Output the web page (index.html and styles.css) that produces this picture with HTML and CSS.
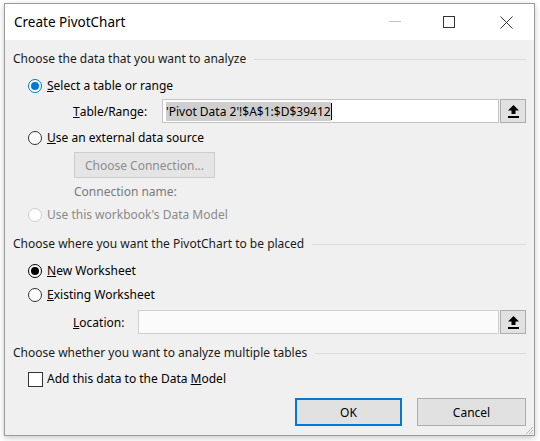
FILE: index.html
```html
<!DOCTYPE html>
<html lang="en">
<head>
<meta charset="utf-8">
<title>Create PivotChart</title>
<link rel="stylesheet" href="styles.css">
</head>
<body>
<div class="window">
  <div class="titlebar">
    <span class="title">Create PivotChart</span>
    <div class="controls">
      <span class="ctl ctl-min"><svg width="12" height="12" viewBox="0 0 12 12"><line x1="0" y1="5.5" x2="12" y2="5.5" stroke="#c4c4c4" stroke-width="1"/></svg></span>
      <span class="ctl ctl-max"><svg width="12" height="12" viewBox="0 0 12 12"><rect x="0.5" y="0.5" width="11" height="11" fill="none" stroke="#333" stroke-width="1"/></svg></span>
      <span class="ctl"><svg width="13" height="13" viewBox="0 0 13 13"><path d="M0.5 0.5 L12.5 12.5 M12.5 0.5 L0.5 12.5" stroke="#333" stroke-width="1" fill="none"/></svg></span>
    </div>
  </div>
  <div class="body">
    <div class="group-head gh-data"><span>Choose the data that you want to analyze</span><span class="rule"></span></div>

    <div class="opt opt-select"><span class="radio radio-blue"></span><span><u>S</u>elect a table or range</span></div>

    <div class="field field-range">
      <span class="field-label label-range"><u>T</u>able/Range:</span>
      <div class="input"><span class="sel">'Pivot Data 2'!$A$1:$D$39412</span><span class="caret"></span></div>
      <span class="refbtn"><svg width="11" height="13" viewBox="0 0 11 13"><path d="M5.5 0 L11 5.5 L7.5 5.5 L7.5 9 L3.5 9 L3.5 5.5 L0 5.5 Z" fill="#000"/><rect x="0" y="11" width="11" height="2" fill="#000"/></svg></span>
    </div>

    <div class="opt opt-external"><span class="radio"></span><span><u>U</u>se an external data source</span></div>

    <div class="conn-row"><span class="btn-disabled">Choose Connection...</span></div>

    <div class="conn-name">Connection name:</div>

    <div class="opt opt-model disabled"><span class="radio radio-disabled"></span><span>Use this workbook's Data Model</span></div>

    <div class="group-head gh-place"><span>Choose where you want the PivotChart to be placed</span><span class="rule"></span></div>

    <div class="opt opt-new"><span class="radio radio-black"></span><span><u>N</u>ew Worksheet</span></div>

    <div class="opt opt-existing"><span class="radio"></span><span><u>E</u>xisting Worksheet</span></div>

    <div class="field field-location">
      <span class="field-label label-location"><u>L</u>ocation:</span>
      <div class="input input-location"></div>
      <span class="refbtn"><svg width="11" height="13" viewBox="0 0 11 13"><path d="M5.5 0 L11 5.5 L7.5 5.5 L7.5 9 L3.5 9 L3.5 5.5 L0 5.5 Z" fill="#000"/><rect x="0" y="11" width="11" height="2" fill="#000"/></svg></span>
    </div>

    <div class="group-head gh-tables"><span>Choose whether you want to analyze multiple tables</span><span class="rule"></span></div>

    <div class="opt opt-check"><span class="checkbox"></span><span>Add this data to the Data <u>M</u>odel</span></div>

    <div class="actions">
      <span class="btn btn-ok">OK</span>
      <span class="btn btn-cancel">Cancel</span>
    </div>
  </div>
  <svg class="grip" width="9" height="9" viewBox="0 0 9 9">
    <path d="M8 1 L1 8 M8 4 L4 8 M8 7 L7 8" stroke="#b8b8b8" stroke-width="1" fill="none"/>
  </svg>
</div>
</body>
</html>
```

FILE: styles.css
```css
* { box-sizing: border-box; }

html, body {
  margin: 0;
  padding: 0;
  background: #ffffff;
}

body {
  width: 540px;
  height: 441px;
  overflow: hidden;
  font-family: "Noto Sans", "Open Sans", sans-serif;
  font-size: 12px;
  color: #1a1a1a;
}

.window {
  position: relative;
  margin: 3px 0 0 4px;
  width: 531px;
  height: 433px;
  border: 1px solid #9a9a9a;
  background: #f0f0f0;
  box-shadow: 0 2px 6px rgba(0, 0, 0, 0.22);
  display: flex;
  flex-direction: column;
}

.titlebar {
  height: 36px;
  background: #ffffff;
  display: flex;
  align-items: center;
  justify-content: space-between;
  flex-shrink: 0;
}

.title {
  padding-left: 9px;
  font-size: 13.5px;
  color: #000;
  line-height: 20px;
}

.controls {
  display: flex;
  height: 100%;
}

.ctl {
  width: 55px;
  display: flex;
  align-items: center;
  justify-content: center;
}

.ctl-min {
  padding-right: 4px;
}

.ctl-max {
  padding-right: 5px;
}

.body {
  flex: 1;
  display: flex;
  flex-direction: column;
  padding: 11px 8px 0 8px;
}

.group-head {
  display: flex;
  align-items: center;
  height: 16px;
  line-height: 16px;
  white-space: nowrap;
}

.rule {
  flex: 1;
  height: 1px;
  background: #dcdcdc;
  margin-left: 8px;
}

.gh-place { margin-top: 13px; }
.gh-tables { margin-top: 11px; }

.opt {
  display: flex;
  align-items: center;
  height: 16px;
  line-height: 16px;
  padding-left: 15px;
  white-space: nowrap;
  color: #000;
}

.opt-select { margin-top: 11px; }
.opt-external { margin-top: 7px; }
.opt-model { margin-top: 7px; }
.opt-new { margin-top: 11px; }
.opt-existing { margin-top: 8px; }
.opt-check { margin-top: 10px; }

.opt.disabled { color: #8a8a8a; }

.radio {
  width: 14px;
  height: 14px;
  border-radius: 50%;
  border: 1px solid #333;
  background: #fff;
  margin-right: 5px;
  display: flex;
  align-items: center;
  justify-content: center;
  flex-shrink: 0;
}

.radio-blue { border-color: #0078d7; }
.radio-blue::after {
  content: "";
  width: 8px;
  height: 8px;
  border-radius: 50%;
  background: #0078d7;
}

.radio-black { border-color: #000; }
.radio-black::after {
  content: "";
  width: 8px;
  height: 8px;
  border-radius: 50%;
  background: #000;
}

.radio-disabled { border-color: #cccccc; }

.checkbox {
  width: 15px;
  height: 15px;
  border: 1px solid #333;
  background: #fff;
  margin-right: 4px;
  flex-shrink: 0;
}

.field {
  display: flex;
  align-items: stretch;
  height: 24px;
  padding-left: 60px;
}

.field-range { margin-top: 5px; }
.field-location { margin-top: 7px; }

.field-label {
  display: flex;
  align-items: center;
  color: #000;
  flex-shrink: 0;
}

.label-range { width: 89px; }
.label-location { width: 65px; }

.input {
  flex: 1;
  background: #fff;
  border: 1px solid #c4c4c4;
  display: flex;
  align-items: center;
  padding-left: 3px;
  color: #000;
}

.input-location { background: #fbfbfb; border-color: #d0d0d0; }

.sel {
  background: #cfcfcf;
  line-height: 19px;
  white-space: nowrap;
}

.caret {
  width: 1px;
  height: 17px;
  background: #000;
}

.refbtn {
  width: 26px;
  margin-left: 1px;
  background: #e1e1e1;
  border: 1px solid #adadad;
  display: flex;
  align-items: center;
  justify-content: center;
  flex-shrink: 0;
}

.conn-row {
  margin-top: 6px;
  padding-left: 61px;
  display: flex;
}

.btn-disabled {
  width: 141px;
  height: 26px;
  background: #e5e5e5;
  border: 1px solid #cccccc;
  color: #8d8d8d;
  display: flex;
  align-items: center;
  justify-content: center;
}

.conn-name {
  margin-top: 6px;
  padding-left: 61px;
  height: 16px;
  line-height: 16px;
  color: #7a7a7a;
}

.actions {
  margin-top: 11px;
  display: flex;
  justify-content: flex-end;
  gap: 15px;
}

.btn {
  height: 28px;
  background: #e1e1e1;
  border: 1px solid #adadad;
  display: flex;
  align-items: center;
  justify-content: center;
  color: #000;
}

.btn-ok {
  width: 107px;
  border: 2px solid #0078d7;
}

.btn-cancel { width: 109px; }

.grip {
  position: absolute;
  right: 0;
  bottom: 0;
}
```
